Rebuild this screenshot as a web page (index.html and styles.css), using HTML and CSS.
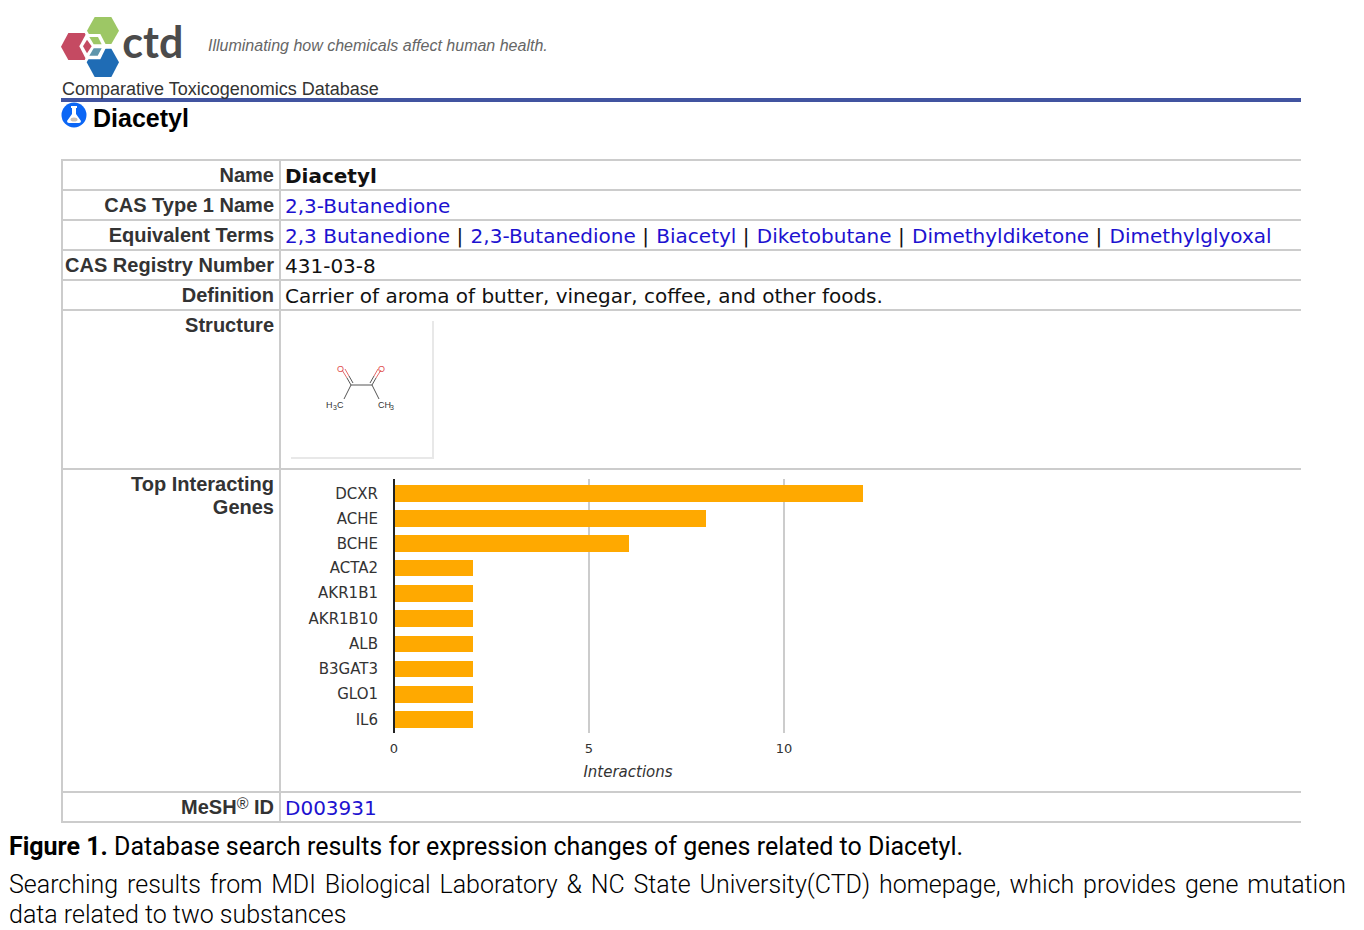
FILE: index.html
```html
<!DOCTYPE html>
<html lang="en">
<head>
<meta charset="utf-8">
<title>Diacetyl - Comparative Toxicogenomics Database</title>
<link rel="stylesheet" href="styles.css">
</head>
<body>
<main class="record">
  <header class="site-header">
    <div class="brand">
      <svg class="logo" viewBox="33 36 375 183" role="img" aria-label="ctd">
        <path fill="#9dc765" d="M134 36H184L207 77L184 117H134L111 77Z"/>
        <path fill="#c54a62" d="M55 84H104L127 124L104 165H55L33 125Z"/>
        <path fill="#1f6cb5" d="M134 131H184L207 172L184 216H134L110 172Z"/>
        <path fill="#fff" d="M108 87H151L170 124L151 163H108L88 124Z"/>
        <path fill="#c54a62" d="M111 104L125 124L111 145L99 124Z"/>
        <path fill="#9dc765" d="M118 96H144L155 118H131Z"/>
        <path fill="#5f95ab" d="M131 130H155L143 152H118Z"/>
        <text class="logo-text" x="217" y="158">ctd</text>
      </svg>
      <p class="tagline">Illuminating how chemicals affect human health.</p>
    </div>
    <p class="site-name">Comparative Toxicogenomics Database</p>
  </header>

  <div class="title-row">
    <svg class="flask" viewBox="0 0 26 26" aria-hidden="true">
      <circle cx="13" cy="13" r="12.5" fill="#0b66f5"/>
      <path fill="#fff" d="M10 4H16V6H15V12L20 19Q20 21 18 21H8Q6 21 6 19L11 12V6H10Z"/>
      <ellipse cx="13" cy="17.500" rx="3.500" ry="2" fill="#c9bfb5"/>
    </svg>
    <h1>Diacetyl</h1>
  </div>

  <table class="details">
    <tr><th scope="row">Name</th><td><b>Diacetyl</b></td></tr>
    <tr><th scope="row">CAS Type 1 Name</th><td><a href="#">2,3-Butanedione</a></td></tr>
    <tr><th scope="row">Equivalent Terms</th><td><a href="#">2,3 Butanedione</a> <span class="sep">|</span> <a href="#">2,3-Butanedione</a> <span class="sep">|</span> <a href="#">Biacetyl</a> <span class="sep">|</span> <a href="#">Diketobutane</a> <span class="sep">|</span> <a href="#">Dimethyldiketone</a> <span class="sep">|</span> <a href="#">Dimethylglyoxal</a></td></tr>
    <tr><th scope="row">CAS Registry Number</th><td>431-03-8</td></tr>
    <tr><th scope="row">Definition</th><td>Carrier of aroma of butter, vinegar, coffee, and other foods.</td></tr>
    <tr>
      <th scope="row">Structure</th>
      <td class="figure-cell">
        <div class="structure">
          <svg viewBox="0 2 144 138" role="img" aria-label="Structure of diacetyl">
            <g fill="none" stroke="#555">
              <path d="M60 66H81M60 66L53 80M81 66L88 80M60 66L56 59M62 64L58 57M81 66L85 59M79 64L83 57"/>
              <path stroke="#e46a6a" d="M56 59L51 51M58 57L54 50M85 59L90 51M83 57L87 50"/>
            </g>
            <g class="atoms">
              <text class="oxygen" x="46" y="53">O</text><text class="oxygen" x="87" y="53">O</text>
              <text x="35" y="89">H</text><text class="sub" x="42" y="91">3</text><text x="46" y="89">C</text>
              <text x="87" y="89">CH</text><text class="sub" x="99" y="91">3</text>
            </g>
          </svg>
        </div>
      </td>
    </tr>
    <tr>
      <th scope="row">Top Interacting<br>Genes</th>
      <td class="figure-cell">
        <svg class="chart" viewBox="0 0 600 321" width="600" height="321" role="img" aria-label="Interactions by gene">
          <path d="M308 9V263M503 9V263" stroke="#ccc" stroke-width="2"/>
          <g fill="#ffa900">
            <rect x="113" y="15" width="469" height="17"/>
            <rect x="113" y="40" width="312" height="17"/>
            <rect x="113" y="65" width="235" height="17"/>
            <rect x="113" y="90" width="79" height="16"/>
            <rect x="113" y="115" width="79" height="17"/>
            <rect x="113" y="140" width="79" height="17"/>
            <rect x="113" y="166" width="79" height="16"/>
            <rect x="113" y="191" width="79" height="16"/>
            <rect x="113" y="216" width="79" height="17"/>
            <rect x="113" y="241" width="79" height="17"/>
          </g>
          <path d="M113 9V263" stroke="#222" stroke-width="2"/>
          <g class="genes">
            <text x="97" y="29">DCXR</text><text x="97" y="54">ACHE</text>
            <text x="97" y="79">BCHE</text><text x="97" y="103">ACTA2</text>
            <text x="97" y="128">AKR1B1</text><text x="97" y="154">AKR1B10</text>
            <text x="97" y="179">ALB</text><text x="97" y="204">B3GAT3</text>
            <text x="97" y="229">GLO1</text><text x="97" y="255">IL6</text>
          </g>
          <g class="ticks">
            <text x="113" y="283">0</text><text x="308" y="283">5</text><text x="503" y="283">10</text>
            <text class="axis" x="347" y="307">Interactions</text>
          </g>
        </svg>
      </td>
    </tr>
    <tr><th scope="row">MeSH<sup>®</sup> ID</th><td><a href="#">D003931</a></td></tr>
  </table>
</main>
<section class="caption">
  <p class="caption-title"><b>Figure 1.</b> Database search results for expression changes of genes related to Diacetyl.</p>
  <p class="caption-text">Searching results from MDI Biological Laboratory &amp; NC State University(CTD) homepage, which provides gene mutation data related to two substances</p>
</section>
</body>
</html>
```
FILE: styles.css
```css
body {
  margin: 0;
  background: #fff;
  color: #111;
  font-family: "DejaVu Sans", Verdana, sans-serif;
}
p, h1 { margin: 0; }
.record { margin: 0 63px 0 61px; }
.site-header {
  padding-top: 17px;
  border-bottom: 4px solid #4154a0;
}
.brand {
  display: flex;
  align-items: center;
  gap: 22px;
}
.logo { width: 125px; height: 61px; overflow: visible; }
.logo-text {
  font: 700 129px Lato, sans-serif;
  fill: #4b4b4b;
}
.tagline {
  font: italic 16px/20px "Liberation Sans", Arial, sans-serif;
  color: #666;
  padding-bottom: 4px;
}
.site-name {
  padding: 2px 0 0 1px;
  font: 18px/18px "Liberation Sans", Arial, sans-serif;
  color: #333;
}
.title-row {
  display: flex;
  align-items: flex-start;
  gap: 6px;
  height: 57px;
}
.flask { width: 26px; height: 26px; }
h1 {
  font: bold 25px/32px "Liberation Sans", Arial, sans-serif;
  color: #000;
}
.details {
  width: 100%;
  border-collapse: collapse;
  font-size: 20px;
  line-height: 26px;
}
.details th, .details td {
  border: 2px solid #ccc;
  box-sizing: border-box;
  vertical-align: top;
  text-align: left;
}
.details td { border-right: 0; padding: 2px 4px 0; }
.details .figure-cell { padding: 0 4px; }
.sep { margin-right: 1px; }
.details th {
  width: 218px;
  font: bold 20px/23px "Liberation Sans", Arial, sans-serif;
  color: #333;
  text-align: right;
  padding: 3px 5px 2px 0;
}
.details a { color: #1d12d0; text-decoration: none; }
.details sup { font-size: 16px; font-weight: normal; line-height: 0; vertical-align: 5px; }
.structure {
  width: 141px;
  height: 136px;
  margin: 10px 0 9px 6px;
  border-right: 2px solid #e8e8e8;
  border-bottom: 2px solid #e8e8e8;
}
.structure svg { display: block; width: 144px; height: 138px; }
.atoms { font: 9px "Liberation Sans", Arial, sans-serif; fill: #333; }
.atoms .sub { font-size: 7px; }
.atoms .oxygen { fill: #e05050; }
.chart { display: block; max-width: 100%; margin-left: -4px; }
.genes { font-size: 15px; fill: #333; text-anchor: end; }
.ticks { font-size: 13px; fill: #333; text-anchor: middle; }
.ticks .axis { font-size: 15px; font-style: italic; }
.caption {
  padding: 9px 18px 0 9px;
  color: #000;
  font: 25px/30px Roboto, sans-serif;
}
.caption-title { margin-bottom: 8px; }
.caption-text { font-weight: 300; text-align: justify; }
```
